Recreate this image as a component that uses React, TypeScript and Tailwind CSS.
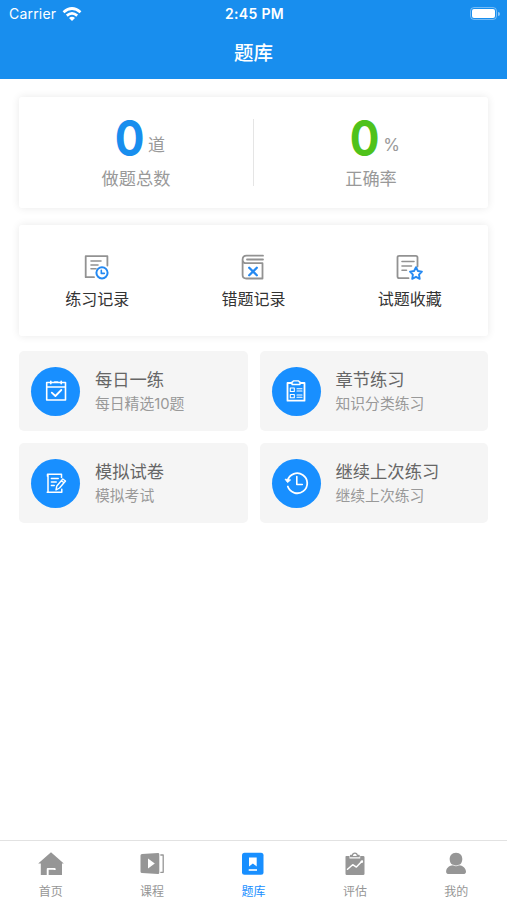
import type { ReactNode } from "react";

function Icon({ box, className = "", children }: { box: string; className?: string; children: ReactNode }) {
  return (
    <svg viewBox={box} className={"block shrink-0 " + className} fill="none" stroke="currentColor" strokeLinejoin="round" strokeLinecap="round" strokeWidth="1.6">
      {children}
    </svg>
  );
}

const practiceIcon = (
  <Icon box="0 0 28 28" className="size-7 text-[#929292]">
    <path d="M11 24.2H2.700V3.200h21.700v9.3" strokeWidth="1.8" />
    <path d="M8 8h10M8 12h7M8 15.7h5" />
    <circle cx="19" cy="19.8" r="5.6" stroke="#2489f2" strokeWidth="2" />
    <path d="M18.300 17.2v3.2h3" stroke="#2489f2" />
  </Icon>
);

const wrongIcon = (
  <Icon box="0 0 28 28" className="size-7 text-[#929292]">
    <path d="M24 2.7H7.5Q3.6 2.7 3.6 6.5V22q0 3.5 3.8 3.5h16.1V10.2H7.5q-3.9 0-3.9-3.8M8 6.5h16" strokeWidth="1.8" />
    <path d="M10.200 14.800l7.600 7.400M17.800 14.800l-7.600 7.400" stroke="#2489f2" strokeWidth="2.3" />
  </Icon>
);

const favoriteIcon = (
  <Icon box="0 0 28 28" className="size-7 text-[#929292]">
    <path d="M12.500 25.2H3.200q-1.700 0-1.700-1.700V4.5Q1.500 2.8 3.200 2.8h16.600Q21.500 2.8 21.500 4.5v9" strokeWidth="1.8" />
    <path d="M6 8.500h12M6 13h9.500M6 17.300h4.500" />
    <path d="m22 14.2 1.9 3.8 4 .6-2.9 3 .7 4.2-3.7-2-3.8 2 .7-4.2-2.9-3 4.1-.6Z" stroke="#2489f2" strokeWidth="1.9" transform="translate(-2 0)" />
  </Icon>
);

const calendarIcon = (
  <Icon box="0 0 24 24" className="size-6 text-white">
    <path d="M2.7 3.5h18.8V21H2.7zM3 8h18M6.8 2.3v2.5M17.2 2.3v2.5M10.5 3h3.2" />
    <path d="m7.8 13.6 3.6 3.4 5.9-6" strokeWidth="1.8" />
  </Icon>
);

const chapterIcon = (
  <Icon box="0 0 24 24" className="size-6 text-white">
    <path d="M7.5 4h-4v17.7h17V4h-4" strokeWidth="1.8" />
    <path d="M8 3q1 .2 1.4-1.2h5.2Q15 3.200 16 3v2.500H8Z" strokeWidth="1.3" />
    <path d="M6.300 9h4v3.500h-4zM6.300 15.500h4v3.300h-4zM13 9.700h5M13 12h5M13 16h5M13 18.300h5" strokeWidth="1.100" />
  </Icon>
);

const mockIcon = (
  <Icon box="0 0 24 24" className="size-6 text-white">
    <path d="M17.500 6.500V3.300H3.500v2M4 3.300v17.900M3.200 21.200h14.600v-3" strokeWidth="1.500" />
    <path d="M7.300 7.500h7M7.300 11h5M7.300 14.500h3" strokeWidth="1.300" />
    <path d="m12 19 .8-4 6-7 2.700 2-6 7ZM17.500 9.700l2.500 2" strokeWidth="1.400" />
  </Icon>
);

const resumeIcon = (
  <Icon box="0 0 26 26" className="size-[26px] text-white">
    <path d="M4.600 10.500A10 10 0 1 1 4.800 16.500" strokeWidth="1.800" />
    <path d="m2.300 9.500 2.300 3 2.700-2.300Z" fill="white" strokeWidth="1" />
    <path d="M13.800 6.500v8h5.500" strokeWidth="1.600" />
  </Icon>
);

const tabs = [
  {
    label: "首页",
    icon: (
      <Icon box="0 0 28 26" className="h-[26px] w-7">
        <path d="M14 1.300 1.200 12.600h2.600V24H25V12.600h1.800Z" fill="currentColor" stroke="none" />
        <path d="M10.700 24.500V17.900h7v1.200" stroke="white" strokeWidth="1.900" strokeLinecap="butt" />
      </Icon>
    ),
  },
  {
    label: "课程",
    icon: (
      <Icon box="0 0 28 26" className="h-[26px] w-7">
        <path d="m4 3 16-1q1.300 0 1.300 1.300v18.500q0 1.300-1.300 1.300L4 22q-1.500 0-1.500-1.500v-16Q2.500 3 4 3Z" fill="currentColor" stroke="none" />
        <path d="m10 7.500 6.800 5-6.800 5Z" fill="white" stroke="none" />
        <path d="M22.800 4h2.400v17.300h-2.400" strokeWidth="1.300" />
      </Icon>
    ),
  },
  {
    label: "题库",
    icon: (
      <Icon box="0 0 28 26" className="h-[26px] w-7">
        <rect x="3" y="1.800" width="21.500" height="22" rx="2.500" fill="currentColor" stroke="none" />
        <path d="M10 6.500h7.700v9L13.900 12.500 10 15.500Z" fill="white" stroke="none" />
        <path d="M9.700 19h8.300" stroke="white" strokeLinecap="butt" />
      </Icon>
    ),
  },
  {
    label: "评估",
    icon: (
      <Icon box="0 0 28 26" className="h-[26px] w-7">
        <path d="M5 5h3.500v2.500h10.700V5h3q1.300 0 1.300 1.300v16.500q0 1.200-1.300 1.200H5.700q-1.200 0-1.200-1.200V6Q4.500 5 5 5Z" fill="currentColor" stroke="none" />
        <path d="M9.600 5.700V4.400h1.800q.3-2.300 2.500-2.300t2.400 2.300h1.800v1.300Z" strokeWidth="1.300" />
        <path d="m6.500 18.300 5.200-4.600 3.700 2.400 5.800-6" stroke="white" strokeWidth="1.500" />
        <circle cx="20.800" cy="10.700" r="1.300" fill="white" stroke="none" />
      </Icon>
    ),
  },
  {
    label: "我的",
    icon: (
      <Icon box="0 0 28 26" className="h-[26px] w-7">
        <path d="M14 1.800c4.300 0 6.600 3 6.300 6.800-.2 2.800-1.200 4.300-2.800 5.400 3.800.8 6.500 3.500 6.500 6.700 0 1.400-1.200 2.300-2.800 2.300H7c-1.700 0-2.900-.9-2.900-2.300 0-3.300 2.700-5.900 6.500-6.700-1.800-1.100-2.800-2.600-2.900-5.400C7.500 4.800 9.800 1.800 14 1.800Z" fill="currentColor" stroke="none" />
        <path d="M8.500 13.600q5.500 2.700 11 0" stroke="white" strokeWidth=".7" />
      </Icon>
    ),
  },
];

const records = [
  { label: "练习记录", icon: practiceIcon },
  { label: "错题记录", icon: wrongIcon },
  { label: "试题收藏", icon: favoriteIcon },
];

const tiles = [
  { title: "每日一练", note: "每日精选10题", icon: calendarIcon },
  { title: "章节练习", note: "知识分类练习", icon: chapterIcon },
  { title: "模拟试卷", note: "模拟考试", icon: mockIcon },
  { title: "继续上次练习", note: "继续上次练习", icon: resumeIcon },
];

function Stat({ unit, label, tone }: { unit: string; label: string; tone: string }) {
  return (
    <div className="flex flex-1 flex-col items-center pt-4">
      <div className="flex h-[50px] items-start gap-[2px] pl-[6px]">
        <span className={"mt-px scale-x-90 text-[49px] leading-[50px] font-bold " + tone}>0</span>
        <span className="mt-5 text-[17px] leading-[25px] text-[#999]">{unit}</span>
      </div>
      <div className="mt-1 text-[17.2px] leading-6 text-[#999]">{label}</div>
    </div>
  );
}

export default function App() {
  return (
    <div className="flex h-[900px] w-[507px] flex-col overflow-hidden bg-white font-['Inter','Noto_Sans_CJK_SC',sans-serif]">
      <header className="h-[79px] shrink-0 bg-[#188eee] text-white">
        <div className="grid h-[27px] grid-cols-3 items-center pr-[7px] pl-[9px] text-[14px]">
          <div className="flex items-center gap-1.5">
            <span className="tracking-[0.2px]">Carrier</span>
            <svg viewBox="0 0 20 14" className="h-[14px] w-5" fill="none" stroke="white" strokeWidth="2.700">
              <path d="M1.500 5.200q8.500-7.400 17 0M4.800 8.600q5.200-4.400 10.400 0" />
              <path d="M7 11q3-2.300 6 0l-3 3Z" fill="white" stroke="none" />
            </svg>
          </div>
          <span className="text-center font-semibold tracking-[0.3px]">2:45 PM</span>
          <div className="flex items-center justify-end gap-px">
            <div className="h-[13px] w-[27px] rounded-[4px] border border-white/40 p-px">
              <div className="h-full rounded-[2px] bg-white" />
            </div>
            <div className="h-1 w-[2px] rounded-r bg-white/50" />
          </div>
        </div>
        <h1 className="mt-[11px] text-center text-[19.5px] leading-[30px] font-medium">题库</h1>
      </header>

      <main className="flex-1 px-[19px] pt-[18px]">
        <section className="flex h-[111px] rounded-[3px] bg-white shadow-[0_0_9px_rgba(0,0,0,0.09)]">
          <Stat unit="道" label="做题总数" tone="text-[#188eee]" />
          <div className="mt-[22px] h-[67px] w-px bg-[#e5e5e5]" />
          <Stat unit="%" label="正确率" tone="text-[#4fc21b]" />
        </section>

        <section className="mt-[17px] grid h-[111px] grid-cols-3 rounded-[3px] bg-white pt-7 shadow-[0_0_9px_rgba(0,0,0,0.09)]">
          {records.map((r) => (
            <div key={r.label} className="flex flex-col items-center">
              {r.icon}
              <span className="mt-[6px] text-[16px] leading-6 text-[#333]">{r.label}</span>
            </div>
          ))}
        </section>

        <section className="mt-[15px] grid grid-cols-2 gap-3">
          {tiles.map((t) => (
            <div key={t.title} className="flex h-20 items-center rounded-[5px] bg-[#f5f5f5] pl-3">
              <div className="flex size-[49px] shrink-0 items-center justify-center rounded-full bg-[#188fff]">{t.icon}</div>
              <div className="ml-[15px] pt-[2px]">
                <div className="text-[17.300px] leading-[25px] text-[#666]">{t.title}</div>
                <div className="text-[14.800px] leading-[25px] text-[#999]">{t.note}</div>
              </div>
            </div>
          ))}
        </section>
      </main>

      <nav className="grid h-[60px] shrink-0 grid-cols-5 border-t border-[#e2e2e2] pt-[10px]">
        {tabs.map((t) => (
          <div key={t.label} className={"flex flex-col items-center " + (t.label === "题库" ? "text-[#188fff]" : "text-[#969696]")}>
            {t.icon}
            <span className="mt-[6px] text-[12px] leading-[18px]">{t.label}</span>
          </div>
        ))}
      </nav>
    </div>
  );
}
